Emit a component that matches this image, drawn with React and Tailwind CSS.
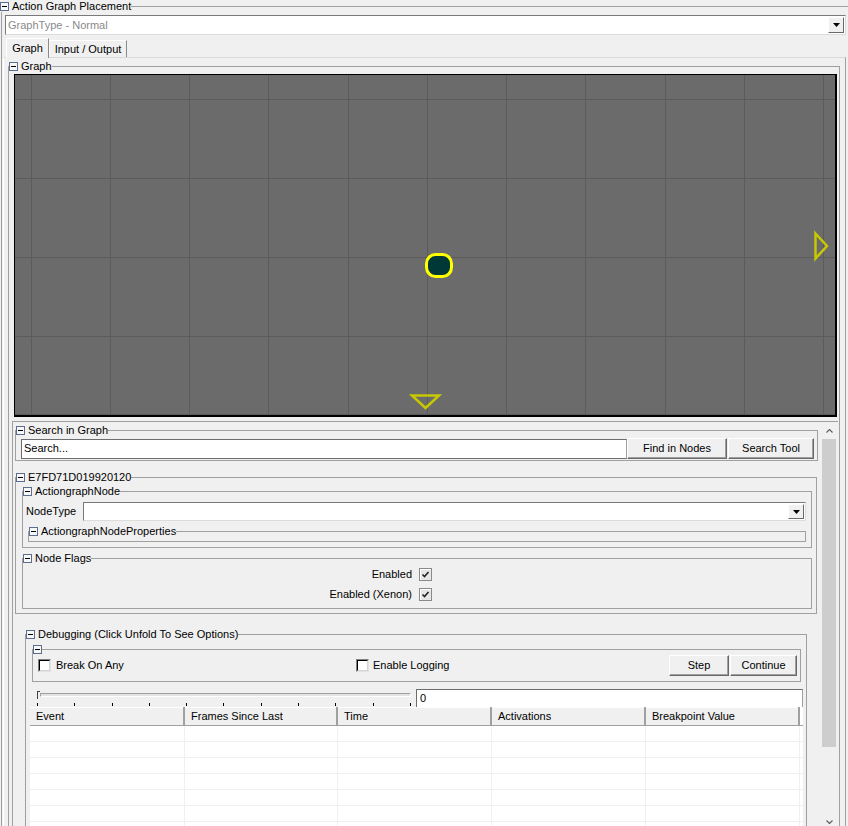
import React from "react";

const vLines = [16, 95, 174, 253, 333, 412, 491, 570, 650, 729, 808];
const hLines = [24, 103, 182, 261];

function Minus() {
  return (
    <span className="flex h-[9px] w-[9px] shrink-0 items-center justify-center border border-[#5b6e8f] bg-[#f7f7f7]">
      <span className="h-px w-[5px] bg-black" />
    </span>
  );
}

function Group({ title, className = "", legendClass = "", children }) {
  return (
    <fieldset className={"min-w-0 border border-[#a0a0a0] " + className}>
      <legend className={"h-[12px] " + legendClass}>
        <span className="flex h-[12px] items-center leading-none">
          <Minus />
          {title && <span className="ml-[3px] whitespace-nowrap">{title}</span>}
        </span>
      </legend>
      {children}
    </fieldset>
  );
}

function DropArrow() {
  return (
    <svg width="7" height="4" viewBox="0 0 7 4">
      <path d="M0 0h7L3.5 4z" fill="#000" />
    </svg>
  );
}

function Combo({ className = "", text, textClass = "" }) {
  return (
    <div
      className={
        "flex items-stretch border border-[#7a7a7a] border-b-[#dcdcdc] border-r-[#dcdcdc] bg-white " +
        className
      }
    >
      <span className={"flex flex-1 items-center pl-[2px] leading-none " + textClass}>{text}</span>
      <span className="m-px flex w-[16px] items-center justify-center border border-t-white border-l-white border-r-[#696969] border-b-[#696969] bg-[#f0f0f0]">
        <DropArrow />
      </span>
    </div>
  );
}

function Button({ className = "", children }) {
  return (
    <div
      className={
        "flex items-center justify-center border border-t-white border-l-white border-r-[#696969] border-b-[#696969] bg-[#f0f0f0] leading-none shadow-[inset_-1px_-1px_0_#a0a0a0] " +
        className
      }
    >
      {children}
    </div>
  );
}

function CheckBox({ checked, flat }) {
  if (flat) {
    return (
      <span className="flex h-[13px] w-[13px] shrink-0 items-center justify-center border border-[#8a8a8a] bg-[#e6e6e6] shadow-[inset_1px_1px_0_#fff]">
        {checked && (
          <svg width="9" height="9" viewBox="0 0 9 9">
            <path d="M1.5 4.5L3.5 6.5L7.5 2" fill="none" stroke="#222" strokeWidth="1.6" />
          </svg>
        )}
      </span>
    );
  }
  return (
    <span className="flex h-[13px] w-[13px] shrink-0 border border-[#808080] border-r-[#e3e3e3] border-b-[#e3e3e3]">
      <span className="flex-1 border border-black border-r-[#d4d4d4] border-b-[#d4d4d4] bg-white" />
    </span>
  );
}

function Chevron({ down }) {
  return (
    <svg width="7" height="4" viewBox="0 0 7 4">
      <path
        d={down ? "M0.5 0.5L3.5 3.5L6.5 0.5" : "M0.5 3.5L3.5 0.5L6.5 3.5"}
        fill="none"
        stroke="#606060"
        strokeWidth="1.2"
      />
    </svg>
  );
}

function GraphCanvas() {
  return (
    <div className="ml-[5px] mt-[2px] h-[343px] w-[823px] border border-black border-b-2 border-r-2">
      <svg width="820" height="340" className="block">
        <rect width="820" height="340" fill="#6b6b6b" />
        {vLines.map((x) => (
          <line key={"v" + x} x1={x + 0.5} y1="0" x2={x + 0.5} y2="340" stroke="#5b5b5b" />
        ))}
        {hLines.map((y) => (
          <line key={"h" + y} x1="0" y1={y + 0.5} x2="820" y2={y + 0.5} stroke="#5b5b5b" />
        ))}
        <line x1="0" y1="339.5" x2="820" y2="339.5" stroke="#5b5b5b" />
        <rect x="411.5" y="179.5" width="25" height="22" rx="9" fill="#003838" stroke="#ffff00" strokeWidth="3" />
        <path d="M800.5 158.5L812 171L800.5 183.5Z" fill="none" stroke="#c8c800" strokeWidth="2.5" />
        <path d="M397 320.5H424L410.5 333Z" fill="none" stroke="#c8c800" strokeWidth="2.5" />
      </svg>
    </div>
  );
}

const columns = [
  ["Event", 155],
  ["Frames Since Last", 153],
  ["Time", 154],
  ["Activations", 154],
  ["Breakpoint Value", 154],
];

function ListView() {
  return (
    <div className="ml-[4px] w-[773px] bg-white">
      <div className="flex h-[19px] border-b border-[#a0a0a0] bg-[#f0f0f0] shadow-[inset_0_1px_0_#fff]">
        {columns.map(([name, w]) => (
          <div
            key={name}
            style={{ width: w }}
            className="flex items-center border-r-2 border-r-[#a0a0a0] pl-[6px] leading-none"
          >
            {name}
          </div>
        ))}
        <div className="flex-1 bg-white" />
      </div>
      {Array.from({ length: 7 }).map((_, i) => (
        <div key={i} className="flex h-[16px] border-b border-[#f0f0f0]">
          {columns.map(([name, w]) => (
            <div key={name} style={{ width: w }} className="border-r border-[#f0f0f0]" />
          ))}
        </div>
      ))}
    </div>
  );
}

function Slider() {
  return (
    <div className="ml-[7px] flex w-[374px] flex-col">
      <div className="mt-[2px] flex h-[8px] items-start">
        <span className="h-[8px] w-[3px] border-l border-t border-[#404040] bg-[#f0f0f0]" />
        <span className="mt-[2px] h-[4px] flex-1 border border-[#a0a0a0] border-b-white border-r-white bg-[#e3e3e3]" />
      </div>
      <div className="mt-[4px] flex justify-between">
        {Array.from({ length: 11 }).map((_, i) => (
          <span key={i} className="h-[3px] w-px bg-black" />
        ))}
      </div>
    </div>
  );
}

export default function App() {
  return (
    <div className="h-[826px] w-[848px] overflow-hidden bg-[#f0f0f0] font-['Liberation_Sans',Arial,sans-serif] text-[11px] text-black">
      <fieldset className="ml-px w-[860px] min-w-0 border border-[#a0a0a0]">
        <legend className="-ml-[2px] h-[12px]">
          <span className="flex h-[12px] items-center leading-none">
            <Minus />
            <span className="ml-[3px]">Action Graph Placement</span>
          </span>
        </legend>

        <Combo className="ml-[3px] mt-[3px] h-[20px] w-[841px]" text="GraphType - Normal" textClass="text-[#8a8a8a]" />

        <div className="ml-px mt-[3px] flex h-[19px] items-end">
          <div className="relative z-10 -mb-px ml-[3px] flex h-[20px] w-[43px] items-center justify-center border border-b-0 border-t-white border-l-white border-r-[#8a8a8a] bg-[#f0f0f0] leading-none">
            Graph
          </div>
          <div className="flex h-[17px] w-[78px] items-center justify-center border border-b-0 border-t-white border-l-[#f8f8f8] border-r-[#8a8a8a] leading-none">
            Input / Output
          </div>
        </div>

        <div className="ml-px h-[780px] w-[843px] border border-t-[#d9d9d9] border-l-white border-r-[#a0a0a0] border-b-0">
          <Group title="Graph" className="ml-[4px] mt-[2px] w-[832px]">
            <GraphCanvas />

            <div className="ml-[3px] mt-[4px] flex h-[409px] w-[826px] border-l border-t border-[#a0a0a0]">
              <div className="w-[808px] overflow-hidden">
                <Group title="Search in Graph" className="ml-[2px] mt-[2px] w-[803px]">
                  <div className="mb-[1px] ml-[5px] mt-[2px] flex h-[21px] items-center">
                    <div className="flex h-[20px] w-[606px] items-center border border-[#6d6d6d] border-r-[#a0a0a0] bg-white pl-[2px] leading-none">
                      Search...
                    </div>
                    <Button className="h-[21px] w-[100px]">Find in Nodes</Button>
                    <Button className="ml-px h-[21px] w-[86px]">Search Tool</Button>
                  </div>
                </Group>

                <Group title="E7FD71D019920120" className="ml-[2px] mt-[10px] w-[802px]">
                  <Group title="ActiongraphNode" className="ml-[6px] mt-[2px] w-[790px]">
                    <div className="mt-[5px] flex h-[19px] items-center pl-[3px]">
                      <span className="w-[57px] leading-none">NodeType</span>
                      <Combo className="h-[19px] w-[723px]" text="" />
                    </div>
                    <Group title="ActiongraphNodeProperties" className="mb-[5px] ml-[5px] mt-[4px] w-[778px]">
                      <div className="h-[4px]" />
                    </Group>
                  </Group>

                  <Group title="Node Flags" className="mb-[4px] ml-[6px] mt-[4px] w-[790px]">
                    <div className="flex h-[20px] w-[409px] items-center justify-end gap-[7px]">
                      <span className="leading-none">Enabled</span>
                      <CheckBox checked flat />
                    </div>
                    <div className="mb-[4px] flex h-[20px] w-[409px] items-center justify-end gap-[7px]">
                      <span className="leading-none">Enabled (Xenon)</span>
                      <CheckBox checked flat />
                    </div>
                  </Group>
                </Group>

                <Group title="Debugging (Click Unfold To See Options)" className="ml-[12px] mt-[14px] w-[782px]">
                  <Group title="" className="ml-[6px] mt-[3px] w-[769px]">
                    <div className="mb-[5px] mt-0 flex h-[21px] items-center pl-[5px] pr-[3px]">
                      <div className="flex w-[318px] items-center gap-[5px]">
                        <CheckBox />
                        <span className="leading-none">Break On Any</span>
                      </div>
                      <div className="flex items-center gap-[4px]">
                        <CheckBox />
                        <span className="leading-none">Enable Logging</span>
                      </div>
                      <Button className="ml-auto h-[21px] w-[60px]">Step</Button>
                      <Button className="ml-px h-[21px] w-[67px]">Continue</Button>
                    </div>
                  </Group>

                  <div className="ml-[4px] mt-[7px] flex h-[18px]">
                    <Slider />
                    <div className="ml-[5px] flex h-[18px] w-[387px] items-center border border-b-0 border-[#6d6d6d] border-r-[#a0a0a0] bg-white pl-[3px] leading-none">
                      0
                    </div>
                  </div>
                  <ListView />
                </Group>
              </div>

              <div className="flex w-[16px] flex-col bg-[#f0f0f0]">
                <div className="flex h-[17px] items-center justify-center">
                  <Chevron />
                </div>
                <div className="mx-px h-[308px] bg-[#cdcdcd]" />
                <div className="flex-1" />
                <div className="flex h-[17px] items-center justify-center">
                  <Chevron down />
                </div>
              </div>
            </div>
          </Group>
        </div>
      </fieldset>
    </div>
  );
}
